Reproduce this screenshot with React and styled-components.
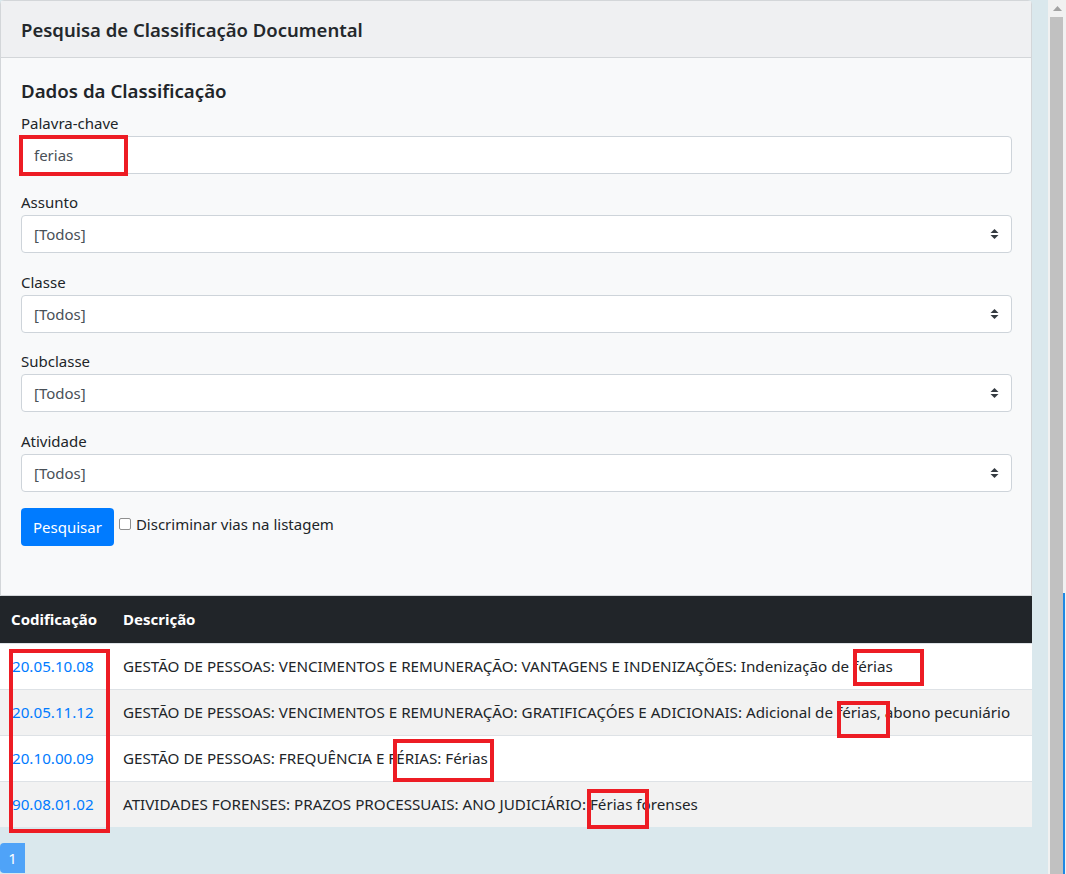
import React from "react";
import styled, { createGlobalStyle } from "styled-components";

const GlobalStyle = createGlobalStyle`
  html, body {
    margin: 0;
    padding: 0;
    background: #dae8ed;
  }
  body {
    font-family: "Noto Sans", "Open Sans", sans-serif;
    font-size: 15px;
    color: #212529;
  }
  * {
    box-sizing: border-box;
  }
`;

const Page = styled.div`
  display: flex;
  gap: 16px;
  height: 874px;
  overflow: hidden;
`;

const Main = styled.div`
  position: relative;
  width: 1032px;
  flex-shrink: 0;
`;

const Card = styled.div`
  background: #f8f9fa;
  border: 1px solid #d3d6d9;
  border-radius: 4px 4px 0 0;
`;

const CardHeader = styled.div`
  background: #eff0f2;
  border-bottom: 1px solid #d3d6d9;
  height: 57px;
  padding: 0 20px;
  display: flex;
  align-items: center;
  font-size: 18.5px;
  font-weight: 600;
  color: #24282c;
`;

const CardBody = styled.div`
  padding: 21px 19px 49px 20px;
`;

const SectionTitle = styled.h5`
  margin: 0 0 8px;
  font-size: 18.7px;
  font-weight: 600;
  line-height: 24px;
`;

const Group = styled.div`
  margin-bottom: 16.4px;
`;

const Label = styled.label`
  display: block;
  line-height: 25px;
  font-size: 15px;
`;

const Field = styled.div`
  height: 38px;
  background: #fff;
  border: 1px solid #ced4da;
  border-radius: 4px;
  padding: 0 12px;
  display: flex;
  align-items: center;
  justify-content: space-between;
  color: #495057;
  font-size: 15px;
`;

const Carets = () => (
  <svg width="9" height="12" viewBox="0 0 9 12">
    <path d="M4.5 1 L8.5 5 L0.5 5 Z M4.5 11 L8.5 7 L0.5 7 Z" fill="#343a40" />
  </svg>
);

const Actions = styled.div`
  display: flex;
  align-items: flex-start;
  gap: 5px;
`;

const Button = styled.button`
  height: 38px;
  padding: 0 12px;
  background: #007bff;
  color: #fff;
  border: 0;
  border-radius: 4px;
  font-family: inherit;
  font-size: 15px;
`;

const Check = styled.label`
  display: flex;
  align-items: center;
  gap: 5px;
  margin-top: 6px;
  font-size: 15px;
`;

const Box = styled.span`
  width: 12px;
  height: 12px;
  border: 1px solid #8f8f8f;
  border-radius: 2px;
  background: #fff;
`;

const Table = styled.table`
  width: 100%;
  border-collapse: collapse;
  font-size: 15.2px;
`;

const Th = styled.th`
  background: #212529;
  color: #fff;
  text-align: left;
  font-weight: 700;
  font-size: 15px;
  padding: 12px;
  line-height: 23px;
  width: ${(p) => p.$w || "auto"};
  &:first-child {
    padding-left: 11px;
  }
`;

const Row = styled.tr`
  background: ${(p) => (p.$striped ? "#f2f2f2" : "#fff")};
`;

const Td = styled.td`
  border-top: 1px solid #dee2e6;
  padding: 12px;
  line-height: 21px;
  white-space: nowrap;
`;

const Code = styled.a`
  color: #007bff;
  text-decoration: none;
`;

const Pager = styled.div`
  margin-top: 16px;
  display: flex;
`;

const PageBtn = styled.span`
  width: 25px;
  height: 30px;
  background: #4fa3f8;
  color: #fff;
  border-radius: 4px 0 0 4px;
  display: flex;
  align-items: center;
  justify-content: center;
  font-size: 15px;
`;

const Mark = styled.div`
  position: absolute;
  border: 4px solid #ed1c24;
  pointer-events: none;
`;

const Scroll = styled.div`
  width: 18px;
  flex-shrink: 0;
  display: flex;
  flex-direction: column;
  background: #f1f1f1;
  position: relative;
`;

const ScrollArrow = styled.div`
  height: 17px;
  display: flex;
  align-items: center;
  justify-content: center;
`;

const Thumb = styled.div`
  flex: 1;
  margin: 0 3px 0 2px;
  background: #c1c1c1;
`;

const BlueEdge = styled.div`
  position: absolute;
  right: 1px;
  top: 593px;
  bottom: 0;
  width: 2px;
  background: #1e88e5;
`;

const fields = ["Assunto", "Classe", "Subclasse", "Atividade"];

const rows = [
  ["20.05.10.08", "GESTÃO DE PESSOAS: VENCIMENTOS E REMUNERAÇÃO: VANTAGENS E INDENIZAÇÕES: Indenização de férias"],
  ["20.05.11.12", "GESTÃO DE PESSOAS: VENCIMENTOS E REMUNERAÇÃO: GRATIFICAÇÓES E ADICIONAIS: Adicional de férias, abono pecuniário"],
  ["20.10.00.09", "GESTÃO DE PESSOAS: FREQUÊNCIA E FÉRIAS: Férias"],
  ["90.08.01.02", "ATIVIDADES FORENSES: PRAZOS PROCESSUAIS: ANO JUDICIÁRIO: Férias forenses"],
];

const marks = [
  { left: 19, top: 135, width: 109, height: 41 },
  { left: 9, top: 649, width: 101, height: 184 },
  { left: 853, top: 649, width: 71, height: 37 },
  { left: 837, top: 701, width: 53, height: 37 },
  { left: 393, top: 739, width: 101, height: 43 },
  { left: 587, top: 789, width: 62, height: 40 },
];

export default function App() {
  return (
    <>
      <GlobalStyle />
      <Page>
        <Main>
          <Card>
            <CardHeader>Pesquisa de Classificação Documental</CardHeader>
            <CardBody>
              <SectionTitle>Dados da Classificação</SectionTitle>
              <Group>
                <Label>Palavra-chave</Label>
                <Field>ferias</Field>
              </Group>
              {fields.map((f) => (
                <Group key={f}>
                  <Label>{f}</Label>
                  <Field>
                    [Todos]
                    <Carets />
                  </Field>
                </Group>
              ))}
              <Actions>
                <Button>Pesquisar</Button>
                <Check>
                  <Box />
                  Discriminar vias na listagem
                </Check>
              </Actions>
            </CardBody>
          </Card>
          <Table>
            <thead>
              <tr>
                <Th $w="111px">Codificação</Th>
                <Th>Descrição</Th>
              </tr>
            </thead>
            <tbody>
              {rows.map(([code, desc], i) => (
                <Row key={code} $striped={i % 2 === 1}>
                  <Td>
                    <Code href="#">{code}</Code>
                  </Td>
                  <Td>{desc}</Td>
                </Row>
              ))}
            </tbody>
          </Table>
          <Pager>
            <PageBtn>1</PageBtn>
          </Pager>
          {marks.map((m, i) => (
            <Mark
              key={i}
              style={{ left: m.left, top: m.top, width: m.width, height: m.height }}
            />
          ))}
        </Main>
        <Scroll>
          <ScrollArrow>
            <svg width="9" height="5" viewBox="0 0 9 5">
              <path d="M4.5 0 L9 5 L0 5 Z" fill="#a3a3a3" />
            </svg>
          </ScrollArrow>
          <Thumb />
          <BlueEdge />
        </Scroll>
      </Page>
    </>
  );
}
